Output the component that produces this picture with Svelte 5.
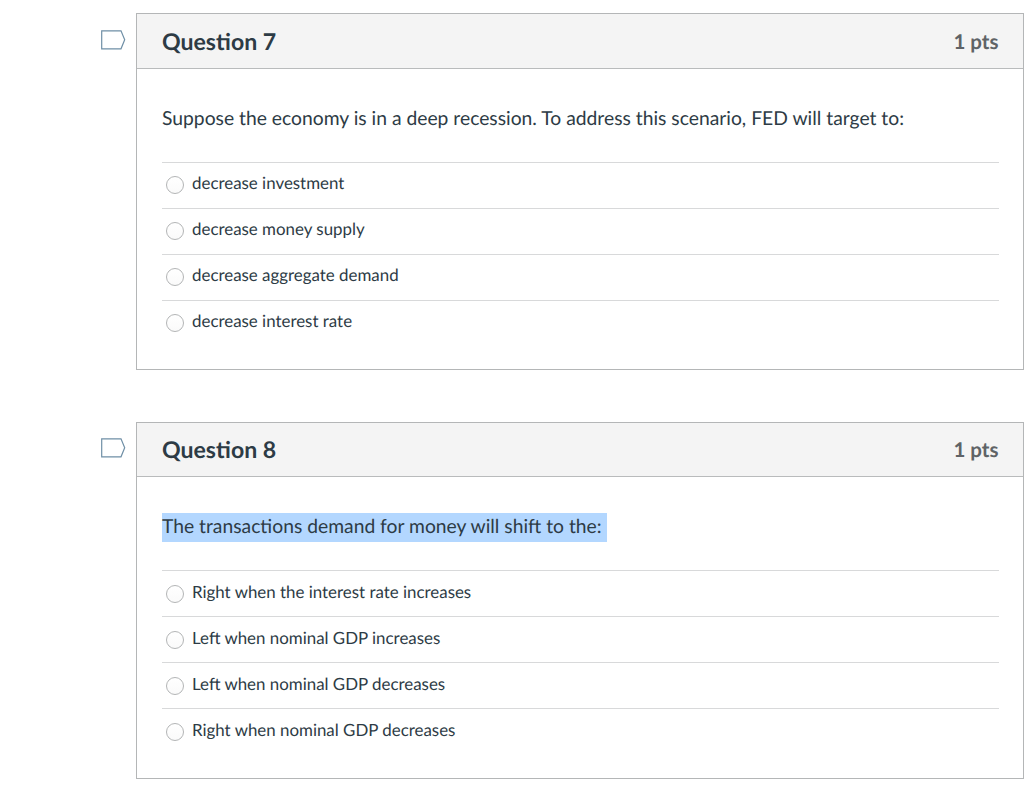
<script>
  const questions = [
    { id: 7, text: 'Suppose the economy is in a deep recession. To address this scenario, FED will target to:', selected: false,
      answers: ['decrease investment', 'decrease money supply', 'decrease aggregate demand', 'decrease interest rate'] },
    { id: 8, text: 'The transactions demand for money will shift to the:', selected: true,
      answers: ['Right when the interest rate increases', 'Left when nominal GDP increases', 'Left when nominal GDP decreases', 'Right when nominal GDP decreases'] }
  ];
</script>

<main class="page">
  {#each questions as q}
    <section class="row">
      <div class="flag">
        <svg width="26" height="20" viewBox="0 0 26 20" aria-hidden="true">
          <path d="M1.7 0.8H21L24.7 9.8L21 18.8H1.7Z" fill="#fff" stroke="#6f8fa6" stroke-width="1.2" />
        </svg>
      </div>
      <article class="card">
        <header class="head">
          <h2>Question {q.id}</h2>
          <span class="pts">1 pts</span>
        </header>
        <div class="body">
          <p class="text"><span class:sel={q.selected}>{q.text}</span></p>
          <ul>
            {#each q.answers as a}
              <li><span class="radio"></span><span class="label">{a}</span></li>
            {/each}
          </ul>
        </div>
      </article>
    </section>
  {/each}
</main>

<style>
  :global(body) { margin: 0; background: #fff; }
  .page {
    padding-top: 13.4px;
    display: flex;
    flex-direction: column;
    gap: 51.4px;
    font-family: Lato, "Open Sans", sans-serif;
    color: #2d3b45;
    text-rendering: geometricPrecision;
    font-variant-ligatures: common-ligatures;
  }
  .row { display: flex; }
  .flag { width: 136px; flex: none; display: flex; justify-content: flex-end; padding: 16.6px 10px 0 0; box-sizing: border-box; }
  .flag svg { display: block; }
  .card { flex: 1; border: 1px solid #b4b6b7; }
  .head {
    height: 53.5px;
    background: #f4f4f4;
    border-bottom: 1px solid #b9bbbc;
    display: flex;
    align-items: center;
    justify-content: space-between;
    padding: 0 24.5px 0 25px;
  }
  h2 { margin: 0 0 1px; font-size: 23.1px; font-weight: 700; }
  .pts { font-size: 20.5px; font-weight: 700; color: #5f6366; margin-top: 1.4px; }
  .body { padding: 36px 24px 23.5px 25px; }
  .text { margin: 0 0 28.5px; font-size: 19.3px; line-height: 28.5px; }
  .sel { background: #b3d7ff; display: inline-block; padding-right: 5px; }
  ul { list-style: none; margin: 0; padding: 0; }
  li {
    height: 46px;
    box-sizing: border-box;
    border-top: 1px solid #d8d9da;
    display: flex;
    align-items: center;
    font-size: 16.9px;
    padding: 0 0 5.5px 4px;
  }
  .radio {
    width: 16px; height: 16px;
    border: 1px solid #b3b5b6; border-radius: 50%;
    background: linear-gradient(#fff, #fafafa);
    margin: 5.5px 8px 0 0;
    flex: none;
  }
</style>
